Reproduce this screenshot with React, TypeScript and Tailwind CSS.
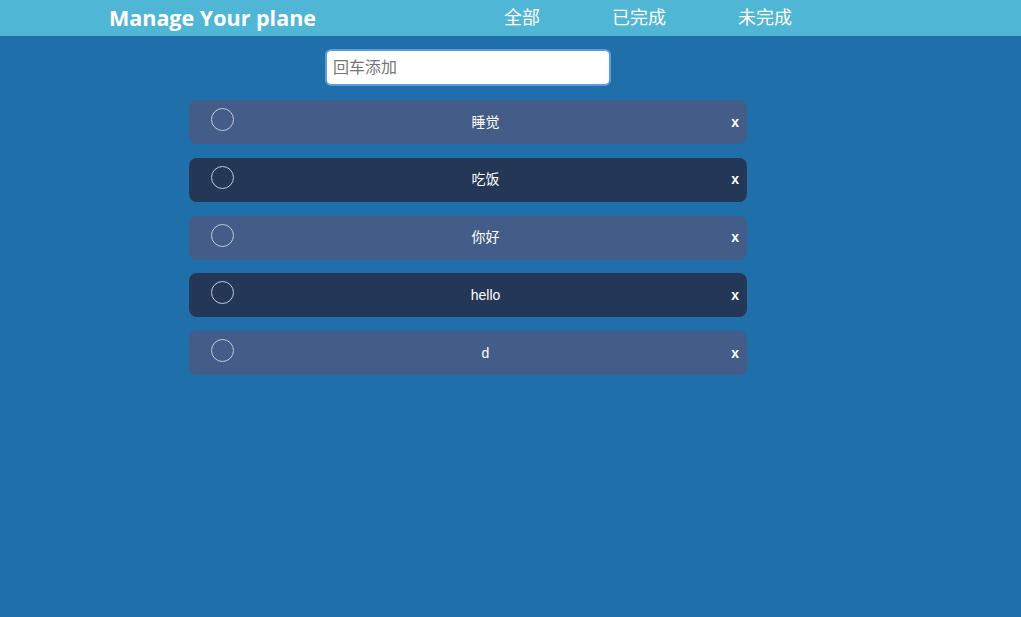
const todos = [
  { id: 1, text: "睡觉" },
  { id: 2, text: "吃饭" },
  { id: 3, text: "你好" },
  { id: 4, text: "hello" },
  { id: 5, text: "d" },
]

const NAV = ["全部", "已完成", "未完成"]

export default function App() {
  return (
    <div className="min-h-[617px] bg-[#1f6fab] font-['Liberation_Sans','Noto_Sans_CJK_SC',sans-serif] text-white">
      {/* Header */}
      <header className="h-[36px] bg-[#50b6d6] flex items-center pl-[109px]">
        <h1 className="w-[395px] font-['Open_Sans',sans-serif] font-bold text-[21.5px] leading-none">
          Manage Your plane
        </h1>
        <nav className="flex gap-[72px] text-[18px] leading-none">
          {NAV.map((n) => (
            <a key={n} href="#" className="text-white">{n}</a>
          ))}
        </nav>
      </header>

      {/* List */}
      <main className="ml-[189px] w-[558px] pt-[13px]">
        <div className="flex justify-center">
          <input
            placeholder="回车添加"
            className="w-[286px] h-[37px] rounded-[6px] bg-white border-2 border-[#5b9be0] px-[6px] text-[16px] text-[#333] placeholder:text-[#777] outline-none"
          />
        </div>

        <ul className="mt-[14px] flex flex-col gap-[13.75px]">
          {todos.map((t, i) => (
            <li
              key={t.id}
              className={`h-[44px] rounded-[8px] flex items-center pl-[22px] ${i % 2 === 0 ? "bg-[#435d88]" : "bg-[#243757]"}`}
            >
              <span className="self-start mt-[8px] w-[23px] h-[23px] rounded-full border border-[#c3cad8] shrink-0" />
              <span className="flex-1 pl-[8px] text-center text-[14px]">{t.text}</span>
              <span className="w-[10px] mr-[8px] text-right text-[14px] font-bold">x</span>
            </li>
          ))}
        </ul>
      </main>
    </div>
  )
}
